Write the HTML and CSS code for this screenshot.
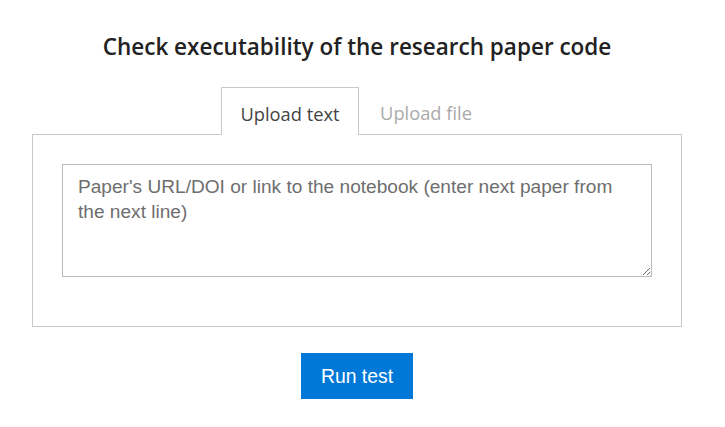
FILE: index.html
```html
<!DOCTYPE html>
<html>
<head>
<meta charset="utf-8">
<link rel="stylesheet" href="styles.css">
</head>
<body>
<main class="page">
  <h1 class="title">Check executability of the research paper code</h1>
  <div class="tabs">
    <div class="tab tab-active">Upload text</div>
    <div class="tab tab-idle">Upload file</div>
  </div>
  <div class="panel">
    <textarea class="input" placeholder="Paper's URL/DOI or link to the notebook (enter next paper from the next line)"></textarea>
  </div>
  <div class="actions">
    <button class="run">Run test</button>
  </div>
</main>
</body>
</html>
```
FILE: styles.css
```css
html, body {
  margin: 0;
  padding: 0;
  background: #fff;
}
.page {
  width: 650px;
  margin-left: 32px;
  display: flex;
  flex-direction: column;
}
.title {
  margin: 33px 0 0;
  height: 54px;
  text-align: center;
  font-family: "Open Sans", sans-serif;
  font-weight: 600;
  font-size: 22.5px;
  line-height: 28px;
  color: #222;
}
.tabs {
  display: flex;
  justify-content: center;
  position: relative;
  z-index: 1;
  margin-bottom: -1px;
}
.tab {
  width: 138px;
  height: 47px;
  box-sizing: border-box;
  display: flex;
  align-items: center;
  justify-content: center;
  padding-top: 3px;
  font-family: "Open Sans", sans-serif;
  font-size: 18.3px;
  color: #aaa;
  border: 1px solid transparent;
  border-bottom: none;
}
.tab-idle {
  width: 134px;
}
.tab-active {
  color: #444;
  background: #fff;
  border-color: #c8c8c8;
  height: 48px;
}
.panel {
  border: 1px solid #c8c8c8;
  padding: 29px 29px 48px;
  height: 193px;
  box-sizing: border-box;
}
.input {
  display: block;
  width: 100%;
  height: 113px;
  box-sizing: border-box;
  border: 1px solid #bbb;
  padding: 9px 15px;
  font-family: "Liberation Sans", Arial, sans-serif;
  font-size: 19.1px;
  line-height: 25px;
  resize: vertical;
  outline: none;
}
.input::placeholder {
  color: #6e6e6e;
}
.actions {
  display: flex;
  justify-content: center;
  padding-top: 26px;
}
.run {
  width: 112px;
  height: 46px;
  border: none;
  background: #0078d7;
  color: #fff;
  font-family: "Liberation Sans", Arial, sans-serif;
  font-size: 19.4px;
  padding-top: 2px;
  cursor: pointer;
}
```
